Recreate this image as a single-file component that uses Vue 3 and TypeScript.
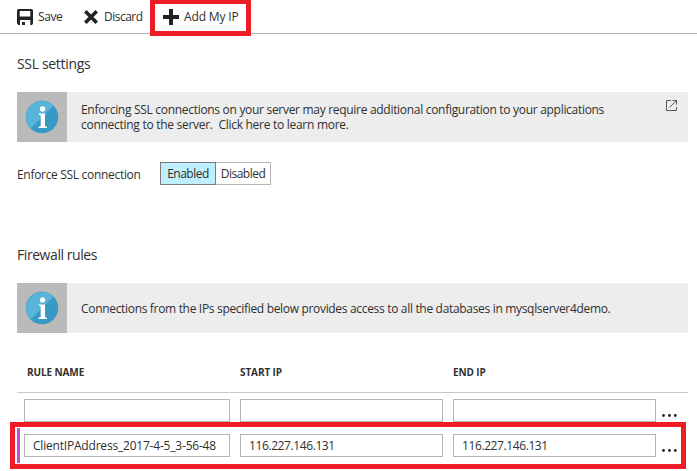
<script setup lang="ts">
import { ref } from 'vue'

interface Rule {
  name: string
  start: string
  end: string
  added: boolean
}

const sslEnabled = ref(true)
const rules = ref<Rule[]>([
  { name: '', start: '', end: '', added: false },
  {
    name: 'ClientIPAddress_2017-4-5_3-56-48',
    start: '116.227.146.131',
    end: '116.227.146.131',
    added: true,
  },
])
const notices = {
  ssl: [
    'Enforcing SSL connections on your server may require additional configuration to your applications',
    'connecting to the server.\u00a0 Click here to learn more.',
  ],
  firewall: ['Connections from the IPs specified below provides access to all the databases in mysqlserver4demo.'],
}
</script>

<template>
  <main class="blade">
    <nav class="toolbar">
      <button class="command save">
        <svg width="16" height="16" viewBox="0 0 16 16">
          <path fill="#222" fill-rule="evenodd" d="M1.500 0H14.500Q16 0 16 1.500V14.500L15 16H13.300V11H3V16H1.500L0 14.500V1.500Q0 0 1.500 0ZM2.700 2V7.500H13.300V2ZM5 13H8V16H5Z" />
        </svg>
        <span class="t-save">Save</span>
      </button>
      <button class="command discard">
        <svg width="14" height="14" viewBox="0 0 14 14">
          <path stroke="#222" stroke-width="3.600" d="M1.300 1.300L12.700 12.700M12.700 1.300L1.300 12.700" />
        </svg>
        <span class="t-discard">Discard</span>
      </button>
      <button class="command add">
        <svg width="16" height="16" viewBox="0 0 16 16">
          <path fill="#222" d="M6 0H10V6H16V10H10V16H6V10H0V6H6Z" />
        </svg>
        <span class="t-add">Add My IP</span>
      </button>
    </nav>

    <section class="ssl">
      <h2 class="t-ssl">SSL settings</h2>
      <div class="notice">
        <div class="badge">
          <svg width="34" height="34" viewBox="0 0 34 34">
            <circle cx="17" cy="17" r="16.200" fill="#3999c6" />
            <path d="M5.550 28.450A16.200 16.200 0 0 1 28.450 5.550Z" fill="#59b4d9" />
            <circle cx="17.600" cy="8.900" r="2.600" fill="#fff" />
            <path fill="#fff" d="M13.800 13.500H20V26.200L22 26.800V28H13.500V26.800L15.700 26.200V15.200L13.800 14.700Z" />
          </svg>
        </div>
        <p class="message">
          <span class="t-n1">{{ notices.ssl[0] }}</span>
          <span class="t-n2">{{ notices.ssl[1] }}</span>
        </p>
        <svg class="external" width="11" height="11" viewBox="0 0 11 11">
          <path fill="none" stroke="#555" d="M5 .5H.5V10.500H10.500V7M6.500 .5H10.500V4.500M10.300 .7L3.500 7.500" />
        </svg>
      </div>
      <div class="setting">
        <span class="label t-enforce">Enforce SSL connection</span>
        <div class="toggle">
          <button class="option" :class="{ selected: sslEnabled }" @click="sslEnabled = true">
            <span class="t-opt">Enabled</span>
          </button>
          <button class="option" :class="{ selected: !sslEnabled }" @click="sslEnabled = false">
            <span class="t-opt">Disabled</span>
          </button>
        </div>
      </div>
    </section>

    <section class="firewall">
      <h2 class="t-fw">Firewall rules</h2>
      <div class="notice">
        <div class="badge">
          <svg width="34" height="34" viewBox="0 0 34 34">
            <circle cx="17" cy="17" r="16.200" fill="#3999c6" />
            <path d="M5.550 28.450A16.200 16.200 0 0 1 28.450 5.550Z" fill="#59b4d9" />
            <circle cx="17.600" cy="8.900" r="2.600" fill="#fff" />
            <path fill="#fff" d="M13.800 13.500H20V26.200L22 26.800V28H13.500V26.800L15.700 26.200V15.200L13.800 14.700Z" />
          </svg>
        </div>
        <p class="message">
          <span class="t-n3">{{ notices.firewall[0] }}</span>
        </p>
      </div>

      <div class="rules">
        <div class="row head">
          <span>RULE NAME</span>
          <span>START IP</span>
          <span>END IP</span>
        </div>
        <div v-for="(rule, i) in rules" :key="i" class="row" :class="{ added: rule.added }">
          <div class="field"><span class="t-name">{{ rule.name }}</span></div>
          <div class="field"><span class="t-ip">{{ rule.start }}</span></div>
          <div class="field"><span class="t-ip">{{ rule.end }}</span></div>
          <svg class="more" width="15" height="3" viewBox="0 0 15 3">
            <circle cx="1.500" cy="1.500" r="1.400" />
            <circle cx="7.500" cy="1.500" r="1.400" />
            <circle cx="13.300" cy="1.500" r="1.400" />
          </svg>
        </div>
      </div>
    </section>

    <div class="highlight highlight-add"></div>
    <div class="highlight highlight-rule"></div>
  </main>
</template>

<style>
body {
  background: #fff;
}
</style>

<style scoped>
.blade {
  position: relative;
  box-sizing: border-box;
  width: 697px;
  height: 471px;
  overflow: hidden;
  font: 12px/15px "Open Sans", "Noto Sans", sans-serif;
  color: #303030;
  white-space: nowrap;
}
button {
  margin: 0;
  padding: 0;
  border: 0;
  background: none;
  font: inherit;
  color: inherit;
}
.toolbar {
  box-sizing: border-box;
  height: 34px;
  display: flex;
  align-items: center;
  padding-left: 17px;
  border-bottom: 1px solid #b5b5b5;
}
.command {
  display: flex;
  align-items: center;
  gap: 5px;
}
.save { width: 67px; }
.discard { width: 79px; gap: 6px; }
svg { display: block; flex: none; }
section { padding-left: 17px; }
h2 {
  margin: 0;
  font-size: 14px;
  font-weight: 400;
  line-height: 20px;
}
.ssl { padding-top: 20px; height: 191px; }
.notice {
  display: flex;
  width: 671px;
  height: 50px;
  margin-top: 18px;
  background: #ededed;
}
.badge {
  width: 50px;
  display: flex;
  align-items: center;
  justify-content: center;
  background: #bababa;
}
.message {
  flex: 1;
  margin: 0;
  padding-left: 14px;
  display: flex;
  flex-direction: column;
  justify-content: center;
}
.external { margin: 8px 11px 0 0; }
.setting {
  display: flex;
  align-items: center;
  margin-top: 20px;
}
.label { width: 143px; padding-top: 1px; }
.toggle { display: flex; }
.option {
  box-sizing: border-box;
  height: 23px;
  width: 55px;
  border: 1px solid #b5b5b5;
  border-left: 0;
  display: flex;
  align-items: center;
  justify-content: center;
}
.option.selected {
  width: 56px;
  border: 1px solid #7a7a7a;
  background: #bfeffc;
}
.rules { width: 671px; }
.row {
  box-sizing: border-box;
  height: 35px;
  padding: 6px 12px 6px 7px;
  display: grid;
  grid-template-columns: 206px 203px 203px 15px;
  column-gap: 10px;
}
.head {
  height: 60px;
  padding: 32px 0 0 10px;
  grid-template-columns: 203px 203px 203px;
  border-bottom: 1px solid #c8c8c8;
  font-size: 10px;
  font-weight: 700;
  letter-spacing: -0.1px;
}
.row.added { padding-left: 4px; border-left: 3px solid #c44ad6; }
.field {
  box-sizing: border-box;
  border: 1px solid #b5b5b5;
  padding: 3px 8px;
}
.more { margin: 15px 0 0 -4px; fill: #222; }
.highlight {
  position: absolute;
  box-sizing: border-box;
  border: 5px solid #ee1c25;
  pointer-events: none;
}
.highlight-add { left: 150px; top: -1px; width: 101px; height: 37px; }
.highlight-rule { left: 10px; top: 422px; width: 676px; height: 47px; }
.t-save { letter-spacing: -0.4px; }
.t-discard { letter-spacing: -0.5px; }
.t-add { letter-spacing: -0.15px; }
.t-opt { letter-spacing: -0.5px; }
.t-ssl { letter-spacing: -0.33px; }
.t-fw { letter-spacing: -0.43px; }
.t-enforce { letter-spacing: -0.31px; }
.t-n1 { letter-spacing: -0.3px; }
.t-n2 { letter-spacing: -0.28px; }
.t-n3 { letter-spacing: -0.32px; }
.t-name { letter-spacing: -0.2px; }
.t-ip { letter-spacing: -0.4px; }
</style>
